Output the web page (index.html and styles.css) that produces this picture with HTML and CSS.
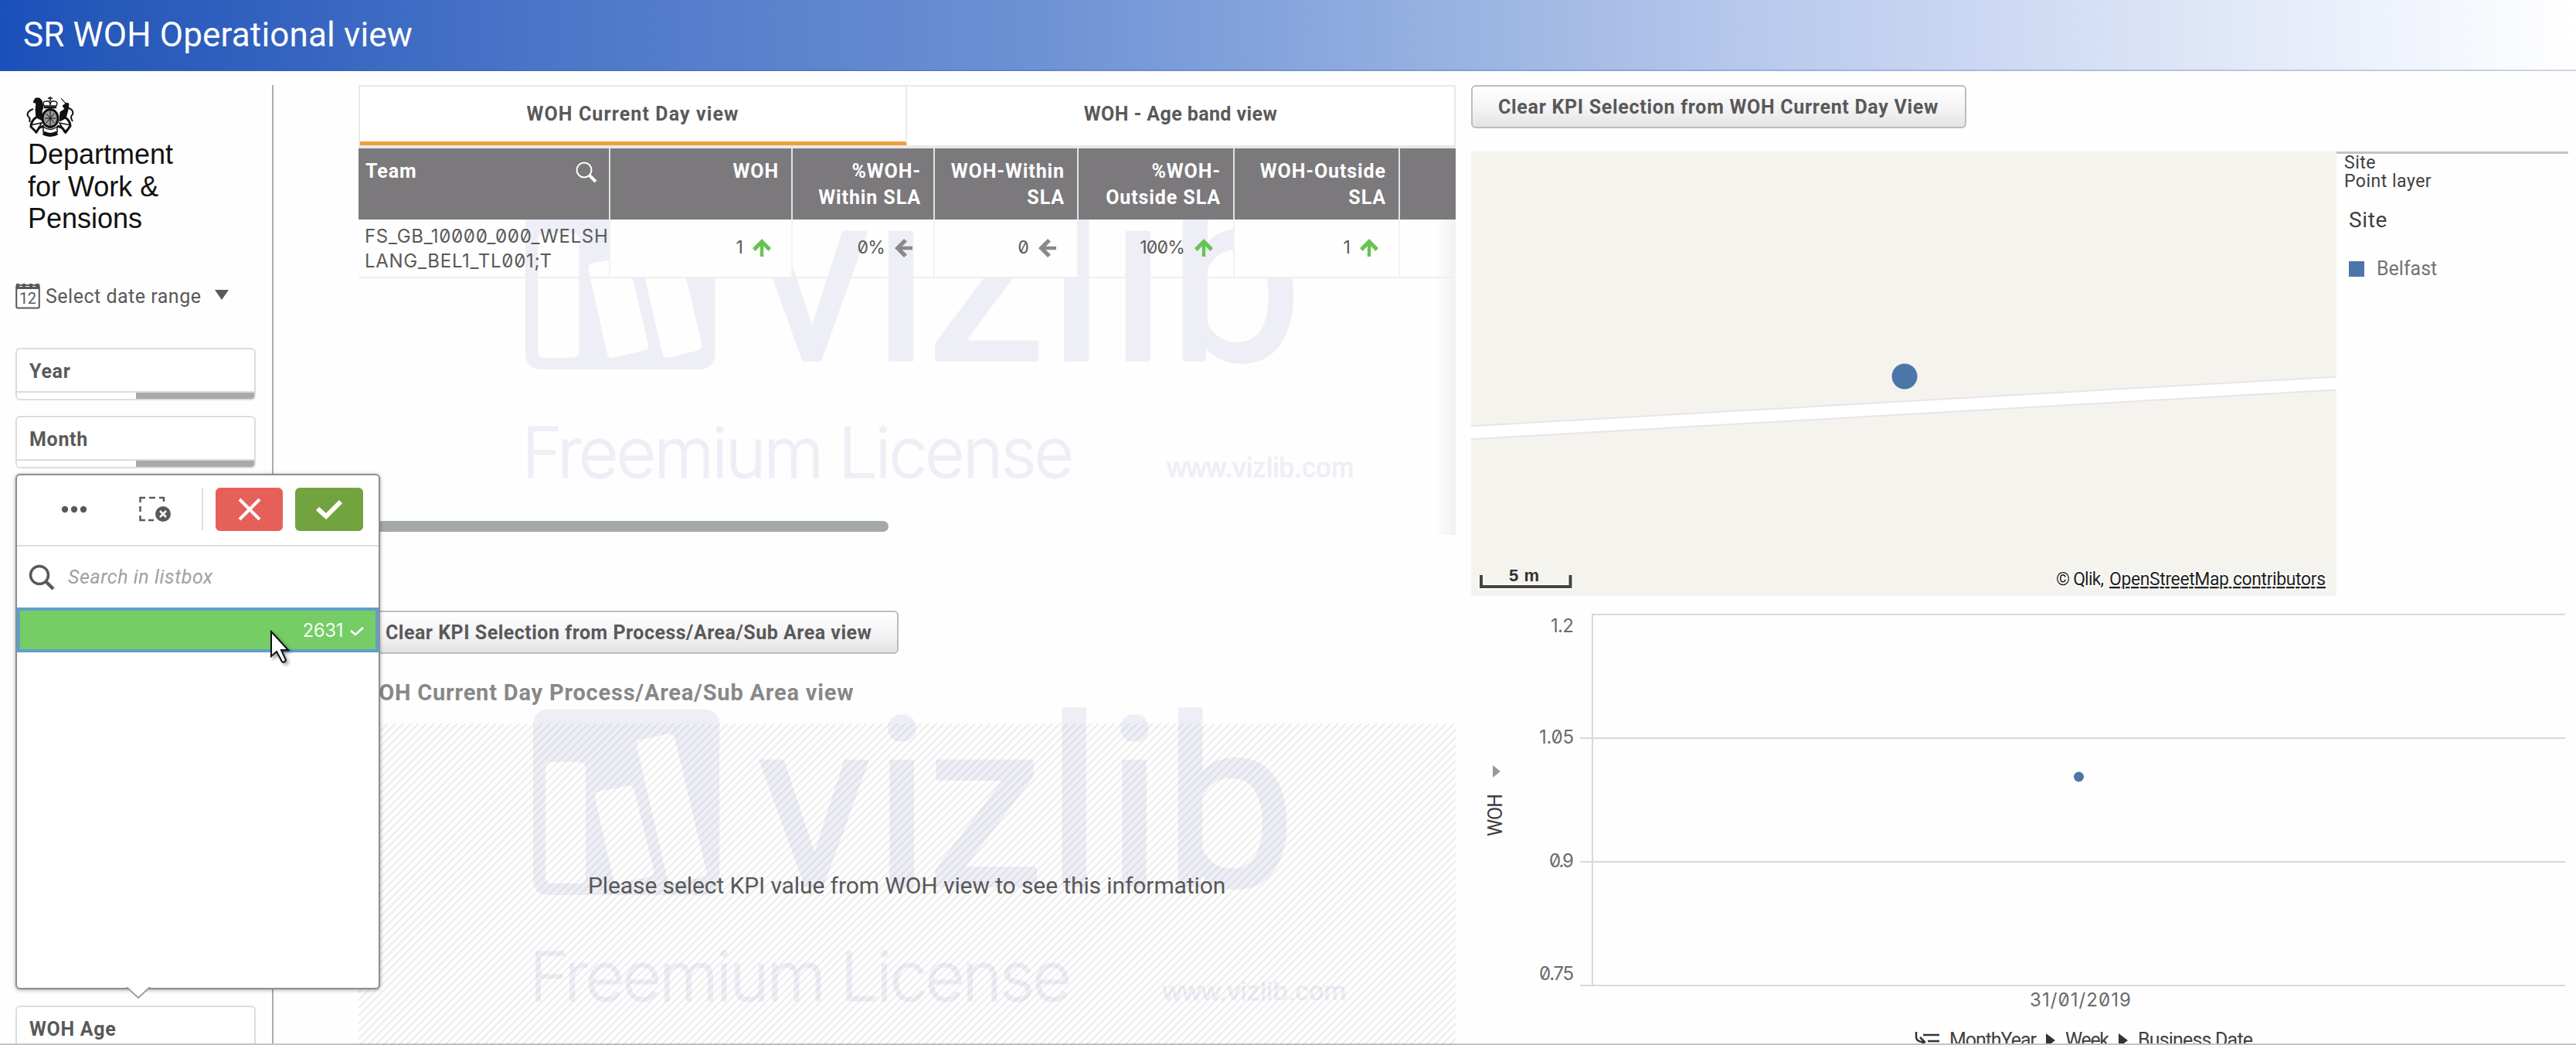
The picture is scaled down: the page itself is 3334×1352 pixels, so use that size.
FILE: index.html
```html
<!DOCTYPE html>
<html lang="en">
<head>
<meta charset="utf-8">
<title>SR WOH Operational view</title>
<link rel="stylesheet" href="styles.css">
</head>
<body>
<header class="topbar"><h1>SR WOH Operational view</h1></header>
<main class="sheet">
  <aside class="sidebar">
    <div class="brand">
      <svg class="crest" width="64" height="54" viewBox="0 0 64 54" fill="none" stroke="#111">
        <path d="M31 1v6M28 3h6" stroke-width="1.6"/>
        <path d="M23 13q-3-6 3-6 5-1 5 5 0-6 5-5 6 0 3 6z" stroke-width="1.5"/>
        <path d="M23 15h16" stroke-width="2.5"/>
        <path d="M12 3l-3 5 4 2-1 8 1 10 8 4-1-12 2-5-2-9-3-3z" fill="#111"/>
        <path d="M45 3l6 7-4 3 3 4-6 4-1 12 8-4 3-11 1-8-5-1z" fill="#111"/>
        <ellipse cx="31" cy="29" rx="10" ry="11.5" stroke-width="3" fill="#999"/>
        <path d="M24 29h14M31 19v21M26 23l10 12M36 23L26 35" stroke-width="1"/>
        <path d="M9 17q-9 3-7 9 4 3 2 8M53 15q9 3 7 9-4 3 0 9" stroke-width="2"/>
        <path d="M14 27q-8 5-8 13l7 7 4-6 6-2M49 27q8 5 8 12l-6 8-5-6-6-2" stroke-width="3"/>
        <path d="M5 38l15-3-8 13M58 38l-15-3 7 13" stroke-width="1.6"/>
        <path d="M22 40v7q9 8 18 0v-7q-9 7-18 0z" stroke-width="1.5"/>
        <path d="M22 48q9 5 18 0" stroke-width="5"/>
      </svg>
      <p>Department<br>for Work &amp;<br>Pensions</p>
    </div>
    <div class="daterange">
      <svg width="32" height="36" viewBox="0 0 32 36">
        <rect x="1.2" y="5" width="29.6" height="29.5" rx="2" fill="none" stroke="#595959" stroke-width="2"/>
        <path d="M1 3h4v4h4V3h4v4h5V3h4v4h4V3h5v7H1z" fill="#595959"/>
        <text x="5" y="29" textLength="22">12</text>
      </svg>
      <span>Select date range</span>
      <svg width="18" height="14" viewBox="0 0 18 14"><path d="M0 0h18L9 13z" fill="#595959"/></svg>
    </div>
    <div class="filter"><b>Year</b><i></i></div>
    <div class="filter"><b>Month</b><i></i></div>
    <div class="filter last"><b>WOH Age</b><i></i></div>
  </aside>

  <section class="middle">
    <nav class="tabs"><div class="tab active"><span>WOH Current Day view</span></div><div class="tab"><span>WOH - Age band view</span></div></nav>
    <div class="tablewrap">
      <svg class="mark" width="1420" height="408" viewBox="464 284 1420 408"><use href="#vizlib" transform="translate(680 478) scale(1.019 1.025) translate(-690 -1158)"/></svg>
      <div class="grid head">
        <div class="team"><span>Team</span><svg width="28" height="28" viewBox="0 0 28 28" fill="none" stroke="#fff"><circle cx="11" cy="11" r="9.5" stroke-width="2"/><path d="M18 18l8 8" stroke-width="4"/></svg></div>
        <div>WOH</div><div>%WOH-<br>Within SLA</div><div>WOH-Within<br>SLA</div><div>%WOH-<br>Outside SLA</div><div>WOH-Outside<br>SLA</div><div></div>
      </div>
      <div class="grid row">
        <div class="name">FS_GB_10000_000_WELSH<br>LANG_BEL1_TL001;T</div>
        <div class="num">1<svg class="up" width="24" height="24" viewBox="0 0 24 24"><use href="#arrow"/></svg></div>
        <div class="num">0%<svg class="left" width="24" height="24" viewBox="0 0 24 24"><use href="#arrow"/></svg></div>
        <div class="num">0<svg class="left" width="24" height="24" viewBox="0 0 24 24"><use href="#arrow"/></svg></div>
        <div class="num">100%<svg class="up" width="24" height="24" viewBox="0 0 24 24"><use href="#arrow"/></svg></div>
        <div class="num">1<svg class="up" width="24" height="24" viewBox="0 0 24 24"><use href="#arrow"/></svg></div>
        <div></div>
      </div>
      <div class="scrollbar"></div>
      <div class="fade"></div>
    </div>
    <button class="btn process"><span>Clear KPI Selection from Process/Area/Sub Area view</span></button>
    <h2>WOH Current Day Process/Area/Sub Area view</h2>
    <div class="empty">
      <svg class="mark low" width="1420" height="440" viewBox="464 910 1420 440">
        <defs>
          <path id="arrow" d="M12 0L0 12l3.600 4L9.800 9.500V23h4.400V9.500L20.400 16 24 12z"/>
          <g id="vizlib">
            <path fill-rule="evenodd" d="M708 918h205a18 18 0 0 1 18 18v204a18 18 0 0 1-18 18H708a18 18 0 0 1-18-18V936a18 18 0 0 1 18-18zM713 986a7 7 0 0 0-7 7v143a7 7 0 0 0 7 7h38a7 7 0 0 0 7-7V993a7 7 0 0 0-7-7zM774 1024q-4 2-4 8l24 106q2 6 7 5l40-9q6-2 5-8l-25-104q-3-7-9-5zM828 957q-5 2-4 8l40 173q2 6 7 5l38-9q6-2 5-8l-41-172q-3-6-9-4z"/>
            <text class="word" y="1146" x="980 1130 1199 1353 1431 1506">vizlib</text>
            <text class="lic" x="685" y="1295" textLength="702">Freemium License</text>
            <text class="www" x="1505" y="1294" textLength="237">www.vizlib.com</text>
          </g>
        </defs>
        <use href="#vizlib"/>
      </svg>
      <p>Please select KPI value from WOH view to see this information</p>
    </div>
  </section>

  <section class="right">
    <button class="btn day"><span>Clear KPI Selection from WOH Current Day View</span></button>
    <div class="maprow">
      <svg class="map" width="1120" height="575" viewBox="1904 196 1120 575">
        <rect x="1904" y="196" width="1120" height="576" fill="#f5f3ee"/>
        <path d="M1890 552L2600 511.500 3040 486.500v17L2600 528.500 1890 569z" fill="#fff" stroke="#e8e4e9" stroke-width="2"/>
        <circle cx="2465" cy="487" r="16.500" fill="#4c75aa"/>
        <path d="M1917 744v15h115.500v-15" fill="none" stroke="#fff" stroke-width="7"/>
        <path d="M1917 744v15h115.500v-15" fill="none" stroke="#444" stroke-width="4"/>
        <text class="scale" x="1953" y="752" textLength="39">5 m</text>
        <text class="attr" x="2661" y="757" textLength="62">© Qlik,</text>
        <text class="attr link" x="2730" y="757" textLength="280">OpenStreetMap contributors</text>
      </svg>
      <div class="legend">
        <p class="layer">Site<br>Point layer</p>
        <p class="dim">Site</p>
        <p class="item"><i></i><span>Belfast</span></p>
      </div>
    </div>
    <svg class="chart" width="1430" height="576" viewBox="1904 776 1430 576">
      <path d="M2061 795H3320M2045 955H3320M2045 1115H3320M2045 1275H3320M2061 794v482" fill="none" stroke="#d8d8d8" stroke-width="2"/>
      <g class="tick">
        <text x="2007" y="818" textLength="30">1.2</text>
        <text x="1992" y="962" textLength="45">1.05</text>
        <text x="2005" y="1122" textLength="32">0.9</text>
        <text x="1992" y="1268" textLength="45">0.75</text>
        <text x="2627" y="1302" textLength="131">31/01/2019</text>
      </g>
      <path d="M1932 990l10 8-10 8z" fill="#999"/>
      <text class="axis" transform="translate(1944 1082) rotate(-90)" x="0" y="0" textLength="55">WOH</text>
      <circle cx="2690.500" cy="1005" r="6.500" fill="#4c75aa"/>
      <path d="M2480 1335v6q0 7 9 7M2485 1342l6 6-6 5" fill="none" stroke="#333" stroke-width="2.500"/>
      <path d="M2489 1339h21M2495 1347h15" stroke="#333" stroke-width="2.500"/>
      <g class="axis">
        <text x="2523" y="1354" textLength="113">MonthYear</text>
        <text x="2673" y="1354" textLength="57">Week</text>
        <text x="2767" y="1354" textLength="149">Business Date</text>
      </g>
      <path d="M2648 1337l12 9-12 9zM2742 1337l12 9-12 9z" fill="#333"/>
    </svg>
  </section>
</main>

<div class="popup">
  <div class="tools">
    <svg width="34" height="10" viewBox="0 0 34 10" fill="#595959"><circle cx="5" cy="5" r="4.200"/><circle cx="17" cy="5" r="4.200"/><circle cx="29" cy="5" r="4.200"/></svg>
    <svg class="lasso" width="42" height="34" viewBox="0 0 42 34" fill="none" stroke="#595959"><path d="M1.500 8V2H8M13 2h8M26 2h6v5M1.500 13v7M1.500 25v6H8M12 31h7" stroke-width="2.500"/><circle cx="31" cy="23" r="10" fill="#595959" stroke="none"/><path d="M27 19l8 8M35 19l-8 8" stroke="#fff" stroke-width="2.500"/></svg>
    <div class="sep"></div>
    <button class="no"><svg width="30" height="30" viewBox="0 0 30 30"><path d="M2 2l26 26M28 2L2 28" stroke="#fff" stroke-width="4"/></svg></button>
    <button class="yes"><svg width="34" height="26" viewBox="0 0 34 26"><path d="M2 12l11 10L32 3" fill="none" stroke="#fff" stroke-width="6"/></svg></button>
  </div>
  <div class="search">
    <svg width="34" height="34" viewBox="0 0 34 34" fill="none" stroke="#595959"><circle cx="14" cy="14" r="11.500" stroke-width="3.500"/><path d="M22 22l10 10" stroke-width="4.500"/></svg>
    <span>Search in listbox</span>
  </div>
  <div class="choice"><span class="val">2631</span><svg width="18" height="12" viewBox="0 0 18 12"><path d="M1 5l6 5L17 1" fill="none" stroke="#fff" stroke-width="2.800"/></svg></div>
  <svg class="tail" width="32" height="16" viewBox="0 0 32 16"><path d="M1 0l15 14L31 0" fill="#fff" stroke="#999" stroke-width="1.800"/></svg>
  <svg class="cursor" width="34" height="50" viewBox="0 0 34 50"><path d="M2 2v32l7-6 7 13q3 2 5-2l-6-13h9z" fill="#fff" stroke="#111" stroke-width="2"/></svg>
</div>
</body>
</html>
```
FILE: styles.css
```css
* { box-sizing: border-box; }
body {
  margin: 0;
  position: relative;
  width: 3334px;
  height: 1352px;
  overflow: hidden;
  background: #fefefe;
  font-family: Roboto, "Liberation Sans", sans-serif;
  color: #595959;
}
body::after {
  content: "";
  position: absolute;
  left: 0; right: 0; bottom: 0;
  height: 2px;
  background: #c4c4c4;
}
h1, h2, p { margin: 0; font-weight: 400; }
svg { display: block; flex: none; }
button { font-family: inherit; margin: 0; }
span, b { white-space: nowrap; }

.topbar {
  height: 92px;
  padding-left: 30px;
  background: linear-gradient(90deg, #1b4fbc 0, #2759b9 4%, #3261bf 10%, #4a76c8 21%, #6c91d4 40%, #9ab3e2 57%, #b7c9ec 68%, #d0dbf4 79%, #e6ecf9 89%, #fff 100%);
  border-bottom: 2px solid rgba(60, 90, 170, .25);
}
.topbar h1 { color: #fff; font-size: 44px; line-height: 90px; letter-spacing: .15px; }

.sheet { display: flex; height: 1260px; }
.sidebar {
  width: 334px;
  height: 1242px;
  margin: 18px 0 0 20px;
  border-right: 2px solid #ababab;
  display: flex;
  flex-direction: column;
}
.brand { flex: none; padding: 14px 0 0 14px; height: 198px; }
.brand p {
  margin: 1px 0 0 2px;
  font: 36px/41.5px "Liberation Sans", sans-serif;
  color: #111;
}
.daterange {
  flex: none;
  display: flex;
  align-items: center;
  height: 150px;
  padding-bottom: 2px;
}
.daterange text { font: 20px Roboto, sans-serif; fill: #595959; }
.daterange span { font-size: 25px; margin: 3px 17px 0 7px; width: 202px; letter-spacing: .5px; }
.filter {
  width: 311px;
  height: 68px;
  flex: none;
  margin-top: 20px;
  border: 2px solid #dcdcdc;
  border-radius: 6px;
  background: #fff;
  display: flex;
  flex-direction: column;
  overflow: hidden;
}
.daterange + .filter { margin-top: -8px; }
.filter.last { margin-top: 695px; }
.filter b { height: 54px; padding-left: 16px; font-size: 25px; line-height: 57px; letter-spacing: .7px; }
.filter i { height: 10px; border-top: 2px solid #dcdcdc; background: linear-gradient(90deg, #fff 50%, #aaa8aa 50%); }

.middle { width: 1420px; margin: 18px 20px 0 110px; }
.tabs { display: flex; height: 82px; border: 2px solid #e9e9ea; border-bottom-width: 4px; background: #fff; }
.tab { width: 50%; text-align: center; font-weight: 700; font-size: 25px; line-height: 72px; letter-spacing: .4px; }
.tab.active { border-right: 2px solid #e9e9ea; border-bottom: 5px solid #f0a03c; letter-spacing: 1.1px; }
.tablewrap { position: relative; height: 500px; }
.mark { position: absolute; left: 0; top: 92px; fill: #eeeef6; }
.word { font: 400 305px Roboto, sans-serif; stroke: #eeeef6; stroke-width: 4px; stroke-linejoin: round; }
.lic { font: 88px Inter, sans-serif; font-weight: 300; stroke: #eeeef6; stroke-width: 1px; }
.www { font: 34px "Liberation Sans", sans-serif; stroke: #eeeef6; stroke-width: 1px; }
.grid { position: relative; display: grid; grid-template-columns: 326px 236px 184px 186px 202px 214px 72px; }
.head { height: 92px; background: #7b797c; color: #fff; font-size: 25px; font-weight: 700; line-height: 34px; letter-spacing: .9px; }
.head div { text-align: right; padding: 13px 16px 0 0; border-right: 2px solid #e2e2e2; }
.head div:last-child, .row div:last-child { border-right: 0; }
.head .team { display: flex; justify-content: space-between; align-items: flex-start; padding: 13px 15px 0 9px; }
.head .team svg { margin-top: 4px; }
.row { height: 76px; border-bottom: 2px solid #efeff0; }
.row div { border-right: 2px solid #f2f2f3; }
.row div:nth-child(even) { background: #fefefe; }
.name { padding: 6px 0 0 8px; font: 24px/32px Inter, sans-serif; font-feature-settings: "zero"; white-space: nowrap; letter-spacing: .7px; }
.num { display: flex; justify-content: flex-end; align-items: center; gap: 13px; padding: 0 26px 2px 0; font: 23px Inter, sans-serif; font-feature-settings: "zero"; letter-spacing: -.8px; }
.num svg { margin-bottom: -1px; }
.up { fill: #67c355; }
.left { fill: #8a888a; transform: rotate(-90deg); }
.mark.low { top: -26px; }
.scrollbar { position: absolute; left: 8px; top: 482px; width: 678px; height: 14px; border-radius: 7px; background: #a4a8aa; }
.fade { position: absolute; right: 0; top: 92px; width: 26px; height: 408px; background: linear-gradient(90deg, rgba(240,240,242,0), rgba(238,238,240,.85)); }
.btn {
  display: block;
  height: 56px;
  padding: 0 33px;
  border: 2px solid #bdbdbd;
  border-radius: 6px;
  background: linear-gradient(#fff, #f4f3f5 55%, #e4e3e4);
  color: #595959;
  font-size: 25px;
  font-weight: 700;
  text-align: left;
}
.process { width: 699px; margin-top: 98px; letter-spacing: .5px; }
.day { width: 641px; letter-spacing: .7px; }
.middle h2 { height: 90px; font-size: 29px; line-height: 100px; font-weight: 700; color: #888; letter-spacing: .8px; white-space: nowrap; }
.empty {
  position: relative;
  height: 416px;
}
.empty::before {
  content: "";
  position: absolute;
  inset: 0;
  z-index: 1;
  background: repeating-linear-gradient(135deg, transparent 0, transparent 4.571px, rgba(60,60,60,.085) 4.571px, rgba(60,60,60,.085) 7.071px);
}
.empty p { position: absolute; z-index: 2; left: 297px; top: 190px; font-size: 30px; line-height: 40px; white-space: nowrap; letter-spacing: -.1px; }

.right { width: 1430px; margin-top: 18px; }
.maprow { display: flex; height: 580px; margin-top: 30px; }
.scale { font: 700 22px "Liberation Sans", sans-serif; fill: #333; }
.attr { font-size: 23px; fill: #222; paint-order: stroke; stroke: #fff; stroke-width: 3px; }
.link { text-decoration: underline; }
.legend { width: 300px; border-top: 3px solid #c4c4c4; color: #404040; }
.layer { padding: 0 0 0 10px; font-size: 23px; line-height: 24px; letter-spacing: .5px; }
.dim { padding: 18px 0 0 16px; font-size: 28px; line-height: 40px; letter-spacing: .6px; }
.item { display: flex; align-items: center; gap: 16px; padding: 25px 0 0 16px; font-size: 25px; line-height: 36px; color: #737373; }
.item i { width: 20px; height: 20px; background: #4c75aa; }
.tick { font: 24px Inter, sans-serif; font-feature-settings: "zero"; fill: #6a6a6a; }
.axis { font-size: 25px; fill: #404040; }

.popup {
  position: absolute;
  left: 20px;
  top: 613px;
  width: 472px;
  height: 667px;
  border: 2px solid #8e8e8e;
  border-radius: 6px;
  background: #fff;
  box-shadow: 0 1px 5px rgba(0,0,0,.35);
  z-index: 5;
}
.tools { display: flex; align-items: center; height: 92px; padding: 0 20px 3px 57px; border-bottom: 2px solid #dedede; }
.lasso { margin-left: 67px; }
.sep { width: 2px; height: 54px; margin-left: 39px; background: #dedede; }
.tools button { display: flex; align-items: center; justify-content: center; width: 88px; height: 56px; border: 0; border-radius: 6px; padding: 0; }
.no { margin-left: 16px; background: #e6605a; }
.tools .yes { margin-left: 16px; background: #72a33f; }
.search { display: flex; align-items: center; gap: 17px; height: 79px; padding-left: 15px; }
.search span { font-size: 25px; font-style: italic; color: #a0a0a0; letter-spacing: .6px; }
.choice { display: flex; align-items: center; justify-content: flex-end; gap: 9px; height: 58px; padding-right: 15px; border: 4px solid #5f9fcb; background: #76cc65; }
.val { font: 24px Inter, sans-serif; letter-spacing: -.4px; color: #f2fff0; }
.choice svg { margin-top: 4px; }
.tail { position: absolute; left: 141px; top: 662px; }
.cursor { position: absolute; left: 327px; top: 200px; filter: drop-shadow(3px 3px 2px rgba(0,0,0,.35)); }
```
